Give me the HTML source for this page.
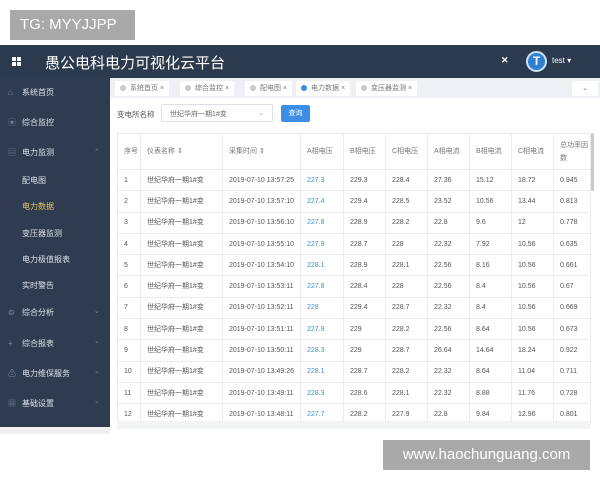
<!DOCTYPE html>
<html><head><meta charset="utf-8"><style>
*{margin:0;padding:0;box-sizing:border-box}
body{width:600px;height:480px;background:#fff;font-family:"Liberation Sans","Noto Sans CJK SC",sans-serif;position:relative;overflow:hidden;color:#555}
.abs{position:absolute}
.hdr{left:0;top:45px;width:600px;height:33px;background:#2c3a4e}
.side{left:0;top:78px;width:110px;height:349px;background:#2f3c50}
.si{position:absolute;left:22px;font-size:8px;color:#dfe3ea;white-space:nowrap;line-height:1}
.ic{position:absolute;left:8px;font-size:8px;color:#7d8899;line-height:1}
.car{position:absolute;left:94px;font-size:7px;color:#7d8899;line-height:1}
.tabs{left:110px;top:78px;width:490px;height:20px;background:#eef0f3}
.tab{position:absolute;top:3px;height:15px;background:#fff;font-size:7px;color:#777;padding:3px 5px;white-space:nowrap;line-height:9px}
.tab i{display:inline-block;width:6px;height:6px;border-radius:3px;background:#c8c8c8;margin-right:4px;vertical-align:-1px}
table{position:absolute;left:117px;top:133px;border-collapse:collapse;font-size:7px;color:#555}
td{border:1px solid #e9ebee;height:21.3px;padding-left:6px;white-space:nowrap;vertical-align:middle;line-height:9px}
tr.h td{height:36px;color:#777}
.bl{color:#3d8fd9}
</style></head><body>
<div class="abs" style="left:10px;top:10px;width:125px;height:30px;background:#a9a9a9;color:#fff;font-size:15px;line-height:30px;padding-left:10px">TG: MYYJJPP</div>
<div class="abs hdr">
 <div class="abs" style="left:12px;top:12px;width:9px;height:9px;display:grid;grid-template-columns:4px 4px;gap:1px"><b style="background:#fff"></b><b style="background:#fff"></b><b style="background:#fff"></b><b style="background:#fff"></b></div>
 <div class="abs" style="left:45px;top:7px;font-size:15px;color:#fff">愚公电科电力可视化云平台</div>
 <div class="abs" style="left:501px;top:10px;font-size:9px;color:#fff;font-weight:bold">✕</div>
 <div class="abs" style="left:526px;top:6px;width:21px;height:21px;border-radius:50%;background:#2f7fd0;border:2px solid #cfe3f7;color:#fff;font-weight:bold;font-size:12px;text-align:center;line-height:17px">T</div>
 <div class="abs" style="left:552px;top:11px;font-size:8px;color:#fff">test ▾</div>
</div>
<div class="abs side">
 <span class="ic" style="top:11px">⌂</span><span class="si" style="top:11px">系统首页</span>
 <span class="ic" style="top:41px">▣</span><span class="si" style="top:41px">综合监控</span>
 <span class="ic" style="top:71px">▤</span><span class="si" style="top:71px">电力监测</span><span class="car" style="top:71px">⌃</span>
 <span class="si" style="top:99px">配电图</span>
 <span class="si" style="top:125px;color:#e8c46a">电力数据</span>
 <span class="si" style="top:152px">变压器监测</span>
 <span class="si" style="top:178px">电力极值报表</span>
 <span class="si" style="top:204px">实时警告</span>
 <span class="ic" style="top:231px">⊜</span><span class="si" style="top:231px">综合分析</span><span class="car" style="top:230px">⌄</span>
 <span class="ic" style="top:262px">+</span><span class="si" style="top:262px">综合报表</span><span class="car" style="top:260px">⌄</span>
 <span class="ic" style="top:292px">⚠</span><span class="si" style="top:292px">电力维保服务</span><span class="car" style="top:290px">⌄</span>
 <span class="ic" style="top:322px">▦</span><span class="si" style="top:322px">基础设置</span><span class="car" style="top:320px">⌄</span>
</div>
<div class="abs" style="left:0;top:427px;width:110px;height:7px;background:#f0f0f0"></div>
<div class="abs tabs">
 <div class="tab" style="left:5px"><i></i>系统首页 ×</div>
 <div class="tab" style="left:70px"><i></i>综合监控 ×</div>
 <div class="tab" style="left:135px"><i></i>配电图 ×</div>
 <div class="tab" style="left:186px"><i style="background:#3d8fd9"></i>电力数据 ×</div>
 <div class="tab" style="left:246px"><i></i>变压器监测 ×</div>
 <div class="tab" style="left:462px;width:26px;text-align:center">⌄</div>
</div>
<div class="abs" style="left:117px;top:109px;font-size:7.5px;color:#555">变电所名称</div>
<div class="abs" style="left:161px;top:104px;width:112px;height:18px;border:1px solid #dcdfe6;border-radius:2px;font-size:7px;padding:4px 8px;color:#666">世纪华府一期1#变<span style="float:right;color:#aaa">⌄</span></div>
<div class="abs" style="left:281px;top:105px;width:29px;height:17px;background:#3d8fe6;border-radius:2px;color:#fff;font-size:7px;text-align:center;line-height:17px">查询</div>
<div class="abs" style="left:591px;top:133px;width:3px;height:58px;background:#c9c9c9;border-radius:2px"></div>
<table>
<colgroup><col style="width:23px"><col style="width:82px"><col style="width:78px"><col style="width:43px"><col style="width:42px"><col style="width:42px"><col style="width:42px"><col style="width:42px"><col style="width:42px"><col style="width:37px"></colgroup>
<tr class="h"><td>序号</td><td>仪表名称 ⇕</td><td>采集时间 ⇕</td><td>A相电压</td><td>B相电压</td><td>C相电压</td><td>A相电流</td><td>B相电流</td><td>C相电流</td><td style="white-space:normal;line-height:13px">总功率因数</td></tr>
<tr><td>1</td><td>世纪华府一期1#变</td><td>2019-07-10 13:57:25</td><td class="bl">227.3</td><td>229.3</td><td>228.4</td><td>27.36</td><td>15.12</td><td>18.72</td><td>0.945</td></tr>
<tr><td>2</td><td>世纪华府一期1#变</td><td>2019-07-10 13:57:10</td><td class="bl">227.4</td><td>229.4</td><td>228.5</td><td>23.52</td><td>10.56</td><td>13.44</td><td>0.813</td></tr>
<tr><td>3</td><td>世纪华府一期1#变</td><td>2019-07-10 13:56:10</td><td class="bl">227.8</td><td>228.9</td><td>228.2</td><td>22.8</td><td>9.6</td><td>12</td><td>0.778</td></tr>
<tr><td>4</td><td>世纪华府一期1#变</td><td>2019-07-10 13:55:10</td><td class="bl">227.9</td><td>228.7</td><td>228</td><td>22.32</td><td>7.92</td><td>10.56</td><td>0.635</td></tr>
<tr><td>5</td><td>世纪华府一期1#变</td><td>2019-07-10 13:54:10</td><td class="bl">228.1</td><td>228.9</td><td>228.1</td><td>22.56</td><td>8.16</td><td>10.56</td><td>0.661</td></tr>
<tr><td>6</td><td>世纪华府一期1#变</td><td>2019-07-10 13:53:11</td><td class="bl">227.8</td><td>228.4</td><td>228</td><td>22.56</td><td>8.4</td><td>10.56</td><td>0.67</td></tr>
<tr><td>7</td><td>世纪华府一期1#变</td><td>2019-07-10 13:52:11</td><td class="bl">228</td><td>229.4</td><td>228.7</td><td>22.32</td><td>8.4</td><td>10.56</td><td>0.669</td></tr>
<tr><td>8</td><td>世纪华府一期1#变</td><td>2019-07-10 13:51:11</td><td class="bl">227.9</td><td>229</td><td>228.2</td><td>22.56</td><td>8.64</td><td>10.56</td><td>0.673</td></tr>
<tr><td>9</td><td>世纪华府一期1#变</td><td>2019-07-10 13:50:11</td><td class="bl">228.3</td><td>229</td><td>228.7</td><td>26.64</td><td>14.64</td><td>18.24</td><td>0.922</td></tr>
<tr><td>10</td><td>世纪华府一期1#变</td><td>2019-07-10 13:49:26</td><td class="bl">228.1</td><td>228.7</td><td>228.2</td><td>22.32</td><td>8.64</td><td>11.04</td><td>0.711</td></tr>
<tr><td>11</td><td>世纪华府一期1#变</td><td>2019-07-10 13:49:11</td><td class="bl">228.3</td><td>228.6</td><td>228.1</td><td>22.32</td><td>8.88</td><td>11.76</td><td>0.728</td></tr>
<tr><td>12</td><td>世纪华府一期1#变</td><td>2019-07-10 13:48:11</td><td class="bl">227.7</td><td>228.2</td><td>227.9</td><td>22.8</td><td>9.84</td><td>12.96</td><td>0.801</td></tr>
</table>
<div class="abs" style="left:117px;top:421px;width:473px;height:8px;background:#f3f4f6"></div>
<div class="abs" style="left:383px;top:440px;width:207px;height:30px;background:#a9a9a9;color:#fff;font-size:15px;line-height:30px;text-align:center">www.haochunguang.com</div>
</body></html>
